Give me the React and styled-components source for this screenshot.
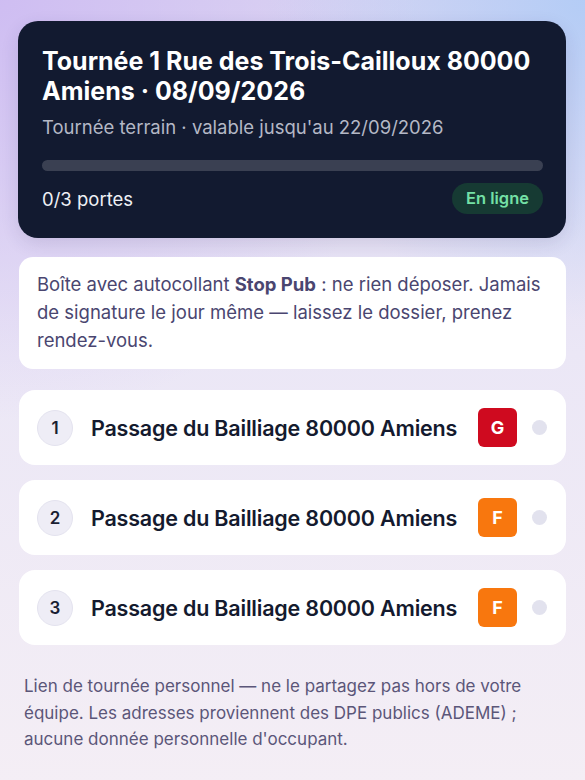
import React from "react";
import styled, { createGlobalStyle } from "styled-components";

const GlobalStyle = createGlobalStyle`
	html, body {
		margin: 0;
		padding: 0;
	}
	body {
		font-family: Inter, "Noto Sans", sans-serif;
		background: #f1ecf5;
	}
`;

const Page = styled.div`
	width: 585px;
	min-height: 780px;
	box-sizing: border-box;
	padding: 21px 19px 30px 18px;
	display: flex;
	flex-direction: column;
	background:
		radial-gradient(circle at 100% 0%, rgba(178, 204, 246, 0.95) 0, rgba(178, 204, 246, 0) 320px),
		radial-gradient(circle at 0% 0%, rgba(206, 188, 242, 0.95) 0, rgba(206, 188, 242, 0) 420px),
		linear-gradient(180deg, #dcd6f2 0%, #ebe7f6 45%, #f4eef5 100%);
`;

const Hero = styled.div`
	background: #121a30;
	border-radius: 20px;
	padding: 25px 23px 24px 24px;
	color: #fff;
	box-shadow: 0 6px 18px rgba(40, 30, 90, 0.12);
`;

const Title = styled.h1`
	margin: 0;
	font-size: 25px;
	font-weight: 700;
	line-height: 30px;
`;

const Sub = styled.div`
	margin-top: 10px;
	font-size: 18.5px;
	color: #b4b8c6;
`;

const Track = styled.div`
	margin-top: 22px;
	height: 11px;
	border-radius: 6px;
	background: #3a4052;
	overflow: hidden;
`;

const Fill = styled.div`
	height: 100%;
	background: #6ee7a8;
`;

const HeroFoot = styled.div`
	margin-top: 12px;
	display: flex;
	align-items: center;
	justify-content: space-between;
`;

const Count = styled.span`
	font-size: 18.5px;
	color: #eef0f5;
`;

const Status = styled.span`
	background: #163a33;
	color: #74e0a6;
	font-weight: 600;
	font-size: 16.5px;
	line-height: 31px;
	padding: 0 14px;
	border-radius: 16px;
`;

const Note = styled.div`
	margin-top: 19px;
	margin-left: 1px;
	background: #fff;
	border-radius: 14px;
	padding: 13px 12px 15px 18px;
	font-size: 18.5px;
	line-height: 28px;
	color: #4a4670;

	b {
		font-weight: 700;
	}
`;

const List = styled.div`
	margin-top: 21px;
	margin-left: 1px;
	display: flex;
	flex-direction: column;
	gap: 15px;
`;

const Row = styled.div`
	background: #fff;
	border-radius: 16px;
	height: 75px;
	box-sizing: border-box;
	padding: 0 19px 0 18px;
	display: flex;
	align-items: center;
`;

const Num = styled.span`
	width: 36px;
	height: 36px;
	border-radius: 50%;
	background: #eeedf6;
	border: 1px solid #e4e3ef;
	box-sizing: border-box;
	display: flex;
	align-items: center;
	justify-content: center;
	font-size: 17px;
	font-weight: 600;
	color: #1a1f33;
`;

const Address = styled.span`
	margin-left: 18px;
	flex: 1;
	font-size: 21.5px;
	font-weight: 600;
	color: #141a2e;
	letter-spacing: -0.2px;
	white-space: nowrap;
`;

const Grade = styled.span`
	width: 39px;
	height: 39px;
	border-radius: 6px;
	background: ${(p) => p.$color};
	color: #fff;
	font-weight: 700;
	font-size: 18px;
	display: flex;
	align-items: center;
	justify-content: center;
`;

const Dot = styled.span`
	margin-left: 15px;
	width: 15px;
	height: 15px;
	border-radius: 50%;
	background: #e2e2ee;
`;

const Foot = styled.p`
	margin: 28px 22px 0 6px;
	font-size: 17px;
	line-height: 26.5px;
	color: #5b5679;
`;

const gradeColors = { G: "#cf0a1f", F: "#f8770e" };

const stops = [
	{ n: 1, address: "Passage du Bailliage 80000 Amiens", grade: "G" },
	{ n: 2, address: "Passage du Bailliage 80000 Amiens", grade: "F" },
	{ n: 3, address: "Passage du Bailliage 80000 Amiens", grade: "F" },
];

export default function App() {
	const done = 0;
	return (
		<>
			<GlobalStyle />
			<Page>
				<Hero>
					<Title>Tournée 1 Rue des Trois-Cailloux 80000 Amiens · 08/09/2026</Title>
					<Sub>Tournée terrain · valable jusqu'au 22/09/2026</Sub>
					<Track>
						<Fill style={{ width: `${(done / stops.length) * 100}%` }} />
					</Track>
					<HeroFoot>
						<Count>
							{done}/{stops.length} portes
						</Count>
						<Status>En ligne</Status>
					</HeroFoot>
				</Hero>
				<Note>
					Boîte avec autocollant <b>Stop Pub</b> : ne rien déposer. Jamais de signature le jour même — laissez le
					dossier, prenez rendez-vous.
				</Note>
				<List>
					{stops.map((s) => (
						<Row key={s.n}>
							<Num>{s.n}</Num>
							<Address>{s.address}</Address>
							<Grade $color={gradeColors[s.grade]}>{s.grade}</Grade>
							<Dot />
						</Row>
					))}
				</List>
				<Foot>
					Lien de tournée personnel — ne le partagez pas hors de votre équipe. Les adresses proviennent des DPE publics
					(ADEME) ; aucune donnée personnelle d'occupant.
				</Foot>
			</Page>
		</>
	);
}
